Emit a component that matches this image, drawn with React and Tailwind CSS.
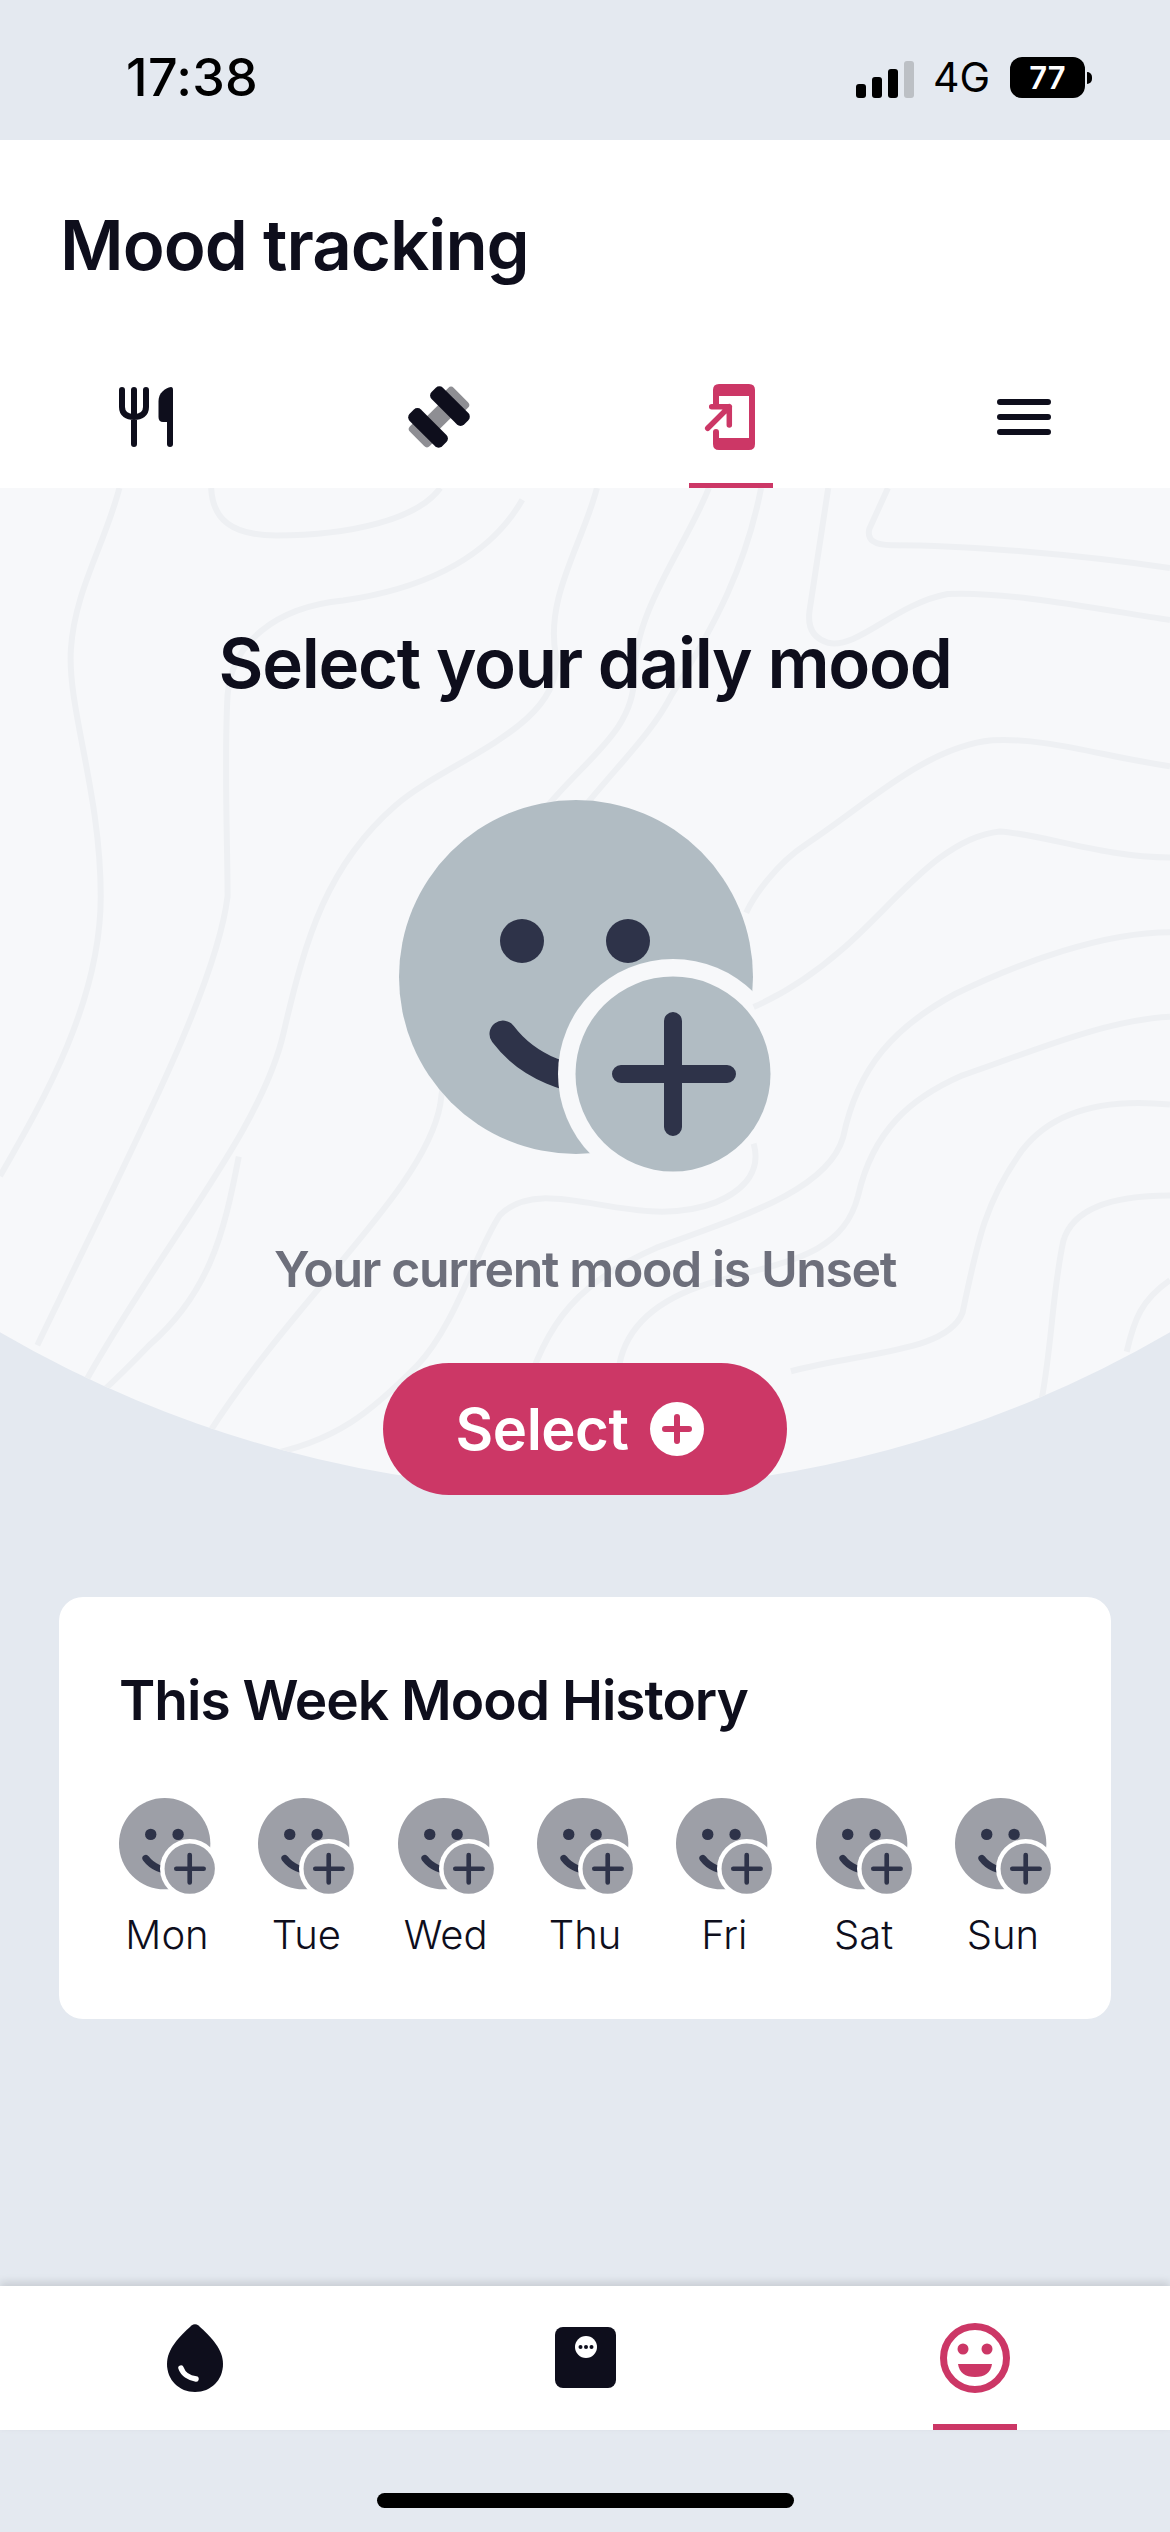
const sans = "font-['Inter',sans-serif]"

function MoodIcon({ size, face, ink, ring, id }) {
    return (
        <svg width={size} height={size} viewBox="0 0 372 372" className="block">
            <mask id={id}>
                <rect width="372" height="372" fill="white" />
                <circle cx="274" cy="274" r={ring} fill="black" />
            </mask>
            <g mask={`url(#${id})`}>
                <circle cx="177" cy="177" r="177" fill={face} />
                <circle cx="123" cy="141" r="22" fill={ink} />
                <circle cx="229" cy="141" r="22" fill={ink} />
                <path d="M104 234 C128 266 170 284 222 284" fill="none" stroke={ink} strokeWidth="27" strokeLinecap="round" />
            </g>
            <circle cx="274" cy="274" r="97.5" fill={face} />
            <path d="M222 274 H328 M274 221 V327" fill="none" stroke={ink} strokeWidth="18" strokeLinecap="round" />
        </svg>
    )
}

function Contours() {
    const lines = [
        "M283 12 C285 60 310 85 370 85 C470 85 560 60 590 12",
        "M1190 12 L1165 75 Q1160 100 1195 100 C1300 100 1450 115 1568 135",
        "M1110 12 L1085 200 Q1080 240 1110 250 C1150 260 1200 190 1270 175 C1350 170 1480 200 1568 215",
        "M160 12 C140 100 100 170 95 260 C90 350 135 480 135 640 C135 800 60 950 0 1070",
        "M700 30 C650 130 550 170 460 185 C370 195 310 250 305 330 C300 430 305 560 305 640 C290 780 180 1020 50 1330",
        "M800 12 C780 100 730 180 745 270 C755 380 600 430 530 500 C440 590 410 700 380 850 C350 1000 220 1170 115 1385",
        "M950 12 C920 100 850 200 850 300 C850 390 780 430 720 520 C640 640 620 700 590 960 C570 1090 400 1250 280 1465",
        "M1020 12 C1000 130 960 220 900 330 C860 420 780 480 700 640",
        "M1568 440 C1480 425 1400 395 1330 400 C1240 410 1160 500 1080 560 C1040 590 1010 640 1000 665",
        "M1568 580 C1480 580 1400 545 1340 540 C1260 550 1200 650 1130 720 C1090 760 1050 790 1010 810",
        "M1568 695 C1480 695 1370 740 1280 790 C1200 840 1150 900 1130 1010 C1110 1090 1000 1130 880 1180 C780 1230 730 1290 700 1420",
        "M1568 825 C1480 830 1380 880 1290 915 C1220 950 1170 1000 1150 1100 C1130 1190 1060 1200 950 1235 C880 1260 840 1300 830 1360",
        "M1568 960 C1480 950 1410 970 1370 1030 C1320 1110 1310 1170 1290 1280 C1270 1340 1160 1340 1060 1370",
        "M1568 1100 C1510 1100 1440 1110 1425 1170 C1410 1250 1410 1330 1395 1420",
        "M1568 1230 C1530 1260 1520 1290 1510 1340",
        "M1010 1020 C1020 1060 1000 1090 960 1110 C850 1160 730 1060 670 1130 C640 1180 610 1300 560 1360 C500 1430 450 1480 350 1500",
        "M320 1040 C300 1160 280 1250 200 1330 C150 1390 120 1420 60 1480",
    ]
    return (
        <svg className="absolute inset-0 w-full h-full" viewBox="0 12 1568 1556" preserveAspectRatio="none">
            <clipPath id="dome">
                <path d="M0 12 H1568 V1310 A1557 1786 0 0 1 0 1310 Z" />
            </clipPath>
            <path d="M0 12 H1568 V1310 A1557 1786 0 0 1 0 1310 Z" fill="#f7f8fa" />
            <g clipPath="url(#dome)" fill="none" stroke="#eef0f3" strokeWidth="6">
                {lines.map((d) => (
                    <path key={d} d={d} vectorEffect="non-scaling-stroke" />
                ))}
            </g>
        </svg>
    )
}

function Fork() {
    return (
        <svg width="54" height="60" viewBox="0 0 54 60" fill="none" stroke="#0e0e1c" strokeWidth="6" strokeLinecap="round">
            <path d="M3 3 V20 C3 27 8 30 15 30 C22 30 27 27 27 20 V3 M15 3 V57" />
            <path d="M51 30 V57" />
            <path d="M52 0 C46 1 39.5 6 39.5 14 V30 Q39.5 35 44 35 H54 V3 Q54 0 52 0Z" fill="#0e0e1c" stroke="none" />
        </svg>
    )
}

function Dumbbell() {
    return (
        <svg width="70" height="70" viewBox="-35 -35 70 70">
            <g transform="rotate(45)">
                <rect x="-14" y="-31" width="28" height="14" rx="4" fill="#8e8e93" />
                <rect x="-14" y="17" width="28" height="14" rx="4" fill="#8e8e93" />
                <rect x="-9" y="-12" width="18" height="24" fill="#8e8e93" />
                <rect x="-23" y="-23.5" width="46" height="16" rx="5" fill="#0e0e1c" />
                <rect x="-23" y="7.5" width="46" height="16" rx="5" fill="#0e0e1c" />
            </g>
        </svg>
    )
}

function PhoneIn() {
    return (
        <svg width="60" height="66" viewBox="0 0 60 66" fill="none">
            <path d="M12 25 V6 Q12 0 18 0 H48 Q54 0 54 6 V60 Q54 66 48 66 H18 Q12 66 12 60 V48 Q12 45 15 45 Q18 45 18 48 V54 H48 V12 H18 V22 Q18 25 15 25 Q12 25 12 22Z" fill="#cc3766" />
            <path d="M6.7 44.3 L28.3 22.7 M10.7 22.7 H28.3 V41" stroke="#cc3766" strokeWidth="5.5" strokeLinecap="round" strokeLinejoin="round" />
        </svg>
    )
}

function Burger() {
    return (
        <svg width="54" height="36" viewBox="0 0 54 36" fill="none" stroke="#0e0e1c" strokeWidth="6" strokeLinecap="round">
            <path d="M3 3 H51 M3 18 H51 M3 33 H51" />
        </svg>
    )
}

function Drop() {
    return (
        <svg width="56" height="68" viewBox="0 0 56 68">
            <path d="M24.5 1.5 Q28 -1 31.5 1.5 C44 13 56 25 56 40 C56 56 44 68 28 68 C12 68 0 56 0 40 C0 25 12 13 24.5 1.5Z" fill="#0e0e1c" />
            <path d="M14 44 C16 50 22 54 29 55" fill="none" stroke="white" strokeWidth="5.5" strokeLinecap="round" />
        </svg>
    )
}

function Scale() {
    return (
        <svg width="61" height="61" viewBox="0 0 61 61">
            <rect width="61" height="61" rx="8" fill="#0e0e1c" />
            <circle cx="31" cy="20" r="11" fill="white" />
            <circle cx="25.5" cy="20" r="2" fill="#0e0e1c" />
            <circle cx="31" cy="20" r="2" fill="#0e0e1c" />
            <circle cx="36.5" cy="20" r="2" fill="#0e0e1c" />
        </svg>
    )
}

function Smile() {
    return (
        <svg width="70" height="70" viewBox="0 0 70 70">
            <circle cx="35" cy="35" r="31.5" fill="none" stroke="#cc3766" strokeWidth="7" />
            <circle cx="23" cy="26" r="5.5" fill="#cc3766" />
            <circle cx="47" cy="26" r="5.5" fill="#cc3766" />
            <path d="M18 41 H52 Q50 54 35 54 Q20 54 18 41Z" fill="#cc3766" />
        </svg>
    )
}

const days = ["Mon", "Tue", "Wed", "Thu", "Fri", "Sat", "Sun"]

export default function App() {
    return (
        <div className={`${sans} w-[1170px] h-[2532px] flex flex-col bg-[#e4e9f0] text-[#0e0e1c] overflow-hidden`}>
            {/* status bar */}
            <div className="h-[140px] flex items-start justify-between pl-[126px] pr-[78px] text-black">
                <span className="mt-[47px] text-[52px] leading-[62px] font-medium tracking-[0.3px]">17:38</span>
                <div className="flex items-center mt-[57px] h-[41px]">
                    <div className="flex items-end gap-[6px] h-[37px] mt-[3px]">
                        <div className="w-[10px] h-[14px] rounded-[3px] bg-black" />
                        <div className="w-[10px] h-[21px] rounded-[3px] bg-black" />
                        <div className="w-[10px] h-[29px] rounded-[3px] bg-black" />
                        <div className="w-[10px] h-[37px] rounded-[3px] bg-[#bcc0c5]" />
                    </div>
                    <span className="ml-[19px] text-[41px] leading-[41px]">4G</span>
                    <div className="ml-[20px] w-[75px] h-[41px] rounded-[12px] bg-black text-white text-[31px] leading-[41px] font-semibold text-center">77</div>
                    <div className="ml-[2px] w-[5px] h-[12px] rounded-r-full bg-black" />
                </div>
            </div>

            {/* header */}
            <div className="bg-white h-[348px] flex flex-col">
                <h1 className="mt-[65px] ml-[60px] text-[69px] leading-[80px] font-semibold tracking-[-1px]">Mood tracking</h1>
                <div className="mt-auto grid grid-cols-4 h-[144px]">
                    <div className="flex justify-center pt-[43px]"><Fork /></div>
                    <div className="flex justify-center pt-[38px]"><Dumbbell /></div>
                    <div className="flex flex-col items-center pt-[40px]">
                        <PhoneIn />
                        <div className="mt-auto w-[84px] h-[5px] bg-[#cc3766]" />
                    </div>
                    <div className="flex justify-center pt-[55px]"><Burger /></div>
                </div>
            </div>

            {/* mood panel */}
            <section className="relative h-[1012px] flex flex-col items-center">
                <Contours />
                <h2 className="relative mt-[130px] text-[69px] leading-[90px] font-semibold tracking-[-1.3px]">Select your daily mood</h2>
                <div className="relative mt-[92px]">
                    <MoodIcon size={372} face="#b1bcc3" ink="#2e3349" ring={115} id="big-mood" />
                </div>
                <p className="relative mt-[67px] text-[50px] leading-[60px] font-semibold tracking-[-1.4px] text-[#6d6f7b]">Your current mood is Unset</p>
                <button className="relative mt-[64px] w-[404px] h-[132px] rounded-full bg-[#cc3766] text-white flex items-center justify-center gap-[22px] pr-[10px]">
                    <span className="text-[58px] leading-none font-semibold tracking-[-0.5px]">Select</span>
                    <svg width="54" height="54" viewBox="0 0 54 54">
                        <circle cx="27" cy="27" r="27" fill="white" />
                        <path d="M15 27 H39 M27 15 V39" stroke="#cc3766" strokeWidth="6" strokeLinecap="round" />
                    </svg>
                </button>
            </section>

            {/* week card */}
            <div className="mt-[97px] mx-[59px] h-[422px] rounded-[24px] bg-white px-[60px] pt-[69px]">
                <h3 className="text-[55px] leading-[68px] font-semibold tracking-[-1px]">This Week Mood History</h3>
                <div className="mt-[64px] flex justify-between">
                    {days.map((d) => (
                        <div key={d} className="w-[96px] flex flex-col items-center">
                            <MoodIcon size={96} face="#9d9fa7" ink="#2e3349" ring={115} id={`mood-${d}`} />
                            <span className="mt-[17px] text-[40px] leading-[48px] font-light whitespace-nowrap">{d}</span>
                        </div>
                    ))}
                </div>
            </div>

            <div className="flex-1" />

            {/* bottom nav */}
            <div className="h-[144px] bg-white grid grid-cols-3 shadow-[0_-4px_8px_rgba(0,0,0,0.12)]">
                <div className="flex justify-center pt-[38px]"><Drop /></div>
                <div className="flex justify-center pt-[41px]"><Scale /></div>
                <div className="flex flex-col items-center pt-[37px]">
                    <Smile />
                    <div className="mt-auto w-[84px] h-[6px] bg-[#cc3766]" />
                </div>
            </div>
            <div className="h-[102px] flex justify-center pt-[63px]">
                <div className="w-[417px] h-[15px] rounded-full bg-black" />
            </div>
        </div>
    )
}
